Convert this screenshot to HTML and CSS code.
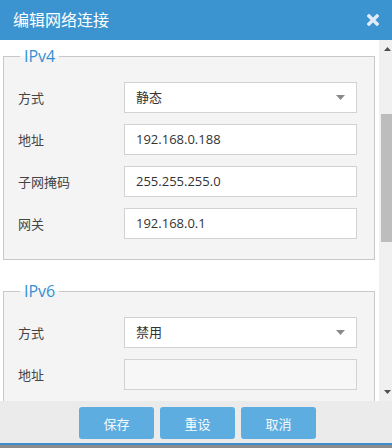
FILE: index.html
```html
<!DOCTYPE html>
<html lang="zh">
<head>
<meta charset="utf-8">
<title>编辑网络连接</title>
<link rel="stylesheet" href="styles.css">
</head>
<body>
<div class="dialog">
  <div class="header">
    <span class="title">编辑网络连接</span>
    <svg class="close" width="12" height="12" viewBox="0 0 12 12"><path d="M2 2 L10 10 M10 2 L2 10" stroke="#dfecf7" stroke-width="3.4" stroke-linecap="square"/></svg>
  </div>
  <div class="body">
    <div class="content">
      <fieldset class="group">
        <legend>IPv4</legend>
        <div class="row"><span class="label">方式</span><div class="field select"><span>静态</span><svg width="9" height="5" viewBox="0 0 9 5"><polygon points="0,0 9,0 4.5,5" fill="#8a8a8a"/></svg></div></div>
        <div class="row"><span class="label">地址</span><div class="field">192.168.0.188</div></div>
        <div class="row"><span class="label">子网掩码</span><div class="field">255.255.255.0</div></div>
        <div class="row"><span class="label">网关</span><div class="field">192.168.0.1</div></div>
      </fieldset>
      <fieldset class="group second">
        <legend>IPv6</legend>
        <div class="row"><span class="label">方式</span><div class="field select"><span>禁用</span><svg width="9" height="5" viewBox="0 0 9 5"><polygon points="0,0 9,0 4.5,5" fill="#8a8a8a"/></svg></div></div>
        <div class="row"><span class="label">地址</span><div class="field disabled"></div></div>
      </fieldset>
    </div>
    <div class="scrollbar">
      <svg class="sb-btn" width="13" height="18" viewBox="0 0 13 18"><polygon points="5,11 8.5,7 12,11" fill="#505050"/></svg>
      <div class="thumb"></div>
      <div class="sb-fill"></div>
      <svg class="sb-btn" width="13" height="18" viewBox="0 0 13 18"><polygon points="5,7 12,7 8.5,11" fill="#505050"/></svg>
    </div>
  </div>
  <div class="footer">
    <button class="btn">保存</button>
    <button class="btn">重设</button>
    <button class="btn">取消</button>
  </div>
</div>
</body>
</html>
```

FILE: styles.css
```css
html, body {
  margin: 0;
  padding: 0;
}
body {
  background: #8c8c8c;
  font-family: "Open Sans", "Noto Sans CJK SC", sans-serif;
  width: 392px;
  height: 448px;
  overflow: hidden;
}
.dialog {
  width: 392px;
  height: 445px;
  box-sizing: border-box;
  background: #fff;
  border-bottom: 2px solid #3a8fcc;
  display: flex;
  flex-direction: column;
}
.header {
  height: 40px;
  flex: none;
  background: #3b94d0;
  display: flex;
  align-items: center;
  justify-content: space-between;
  padding: 0 13px;
}
.title {
  color: #fff;
  font-size: 16px;
  line-height: 20px;
  font-family: "Noto Sans CJK SC", sans-serif;
  margin-top: -2px;
}
.close {
  display: block;
  margin-top: -1px;
}
.body {
  height: 361px;
  flex: none;
  display: flex;
}
.content {
  flex: 1;
  overflow: hidden;
  padding: 6px 4px 0 3px;
}
.group {
  margin: 0;
  padding: 16px 17px 20px 14px;
  border: 1px solid #c8c8c8;
  background: #f4f4f4;
  min-width: 0;
}
.group.second {
  margin-top: 21px;
}
.group legend {
  margin-left: 2px;
  padding: 0 4px;
  font-size: 16px;
  line-height: 20px;
  color: #3590d0;
}
.row {
  display: flex;
  align-items: center;
  height: 31px;
}
.row + .row {
  margin-top: 11px;
}
.label {
  width: 106px;
  flex: none;
  font-size: 13px;
  color: #444;
  font-family: "Noto Sans CJK SC", sans-serif;
}
.field {
  width: 233px;
  height: 31px;
  box-sizing: border-box;
  border: 1px solid #d2d2d2;
  background: #fff;
  padding: 0 11px;
  font-size: 13px;
  line-height: 29px;
  color: #333;
  display: flex;
  align-items: center;
  justify-content: space-between;
}
.field.disabled {
  background: #f7f7f7;
}
.select svg {
  display: block;
}
.scrollbar {
  width: 13px;
  flex: none;
  background: #f0f0f0;
  display: flex;
  flex-direction: column;
}
.sb-btn {
  display: block;
  flex: none;
}
.thumb {
  margin: 56px 0 0 2px;
  height: 128px;
  background: #bdbdbd;
}
.sb-fill {
  flex: 1;
}
.footer {
  height: 42px;
  flex: none;
  box-sizing: border-box;
  background: #ebebeb;
  display: flex;
  justify-content: center;
  gap: 6px;
  padding: 6px 0 0 3px;
}
.btn {
  width: 75px;
  height: 32px;
  border: 0;
  border-radius: 3px;
  background: #5eade0;
  color: #f4f9fd;
  font-size: 13px;
  font-family: "Noto Sans CJK SC", sans-serif;
  padding: 0;
}
```
